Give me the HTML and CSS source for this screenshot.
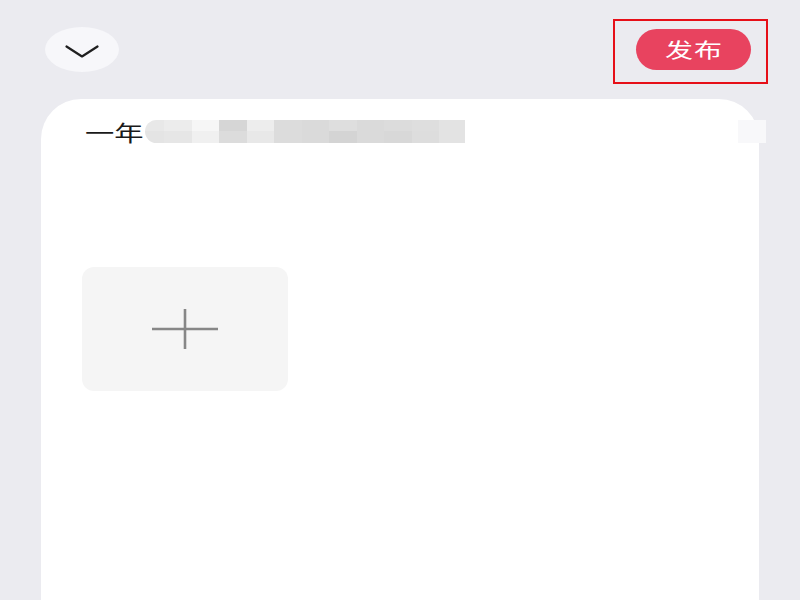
FILE: index.html
```html
<!DOCTYPE html>
<html lang="zh-CN">
<head>
    <meta charset="UTF-8">
    <meta name="viewport" content="width=device-width, initial-scale=1.0">
    <title>发布</title>
    <link rel="stylesheet" href="styles.css">
</head>
<body>
    <!-- Top bar -->
    <div class="topbar">
        <button class="back-btn" aria-label="收起">
            <svg width="34" height="13" viewBox="0 0 34 13" fill="none" stroke="#1f1f1f" stroke-width="2.2" stroke-linecap="round" stroke-linejoin="round">
                <polyline points="1.5 1.5 17 11.5 32.5 1.5"></polyline>
            </svg>
        </button>
        <div class="publish-box">
            <button class="publish-btn"><span class="publish-text">发布</span></button>
        </div>
    </div>

    <!-- Editor card -->
    <div class="card">
        <div class="title-row">
            <span class="title-text"><span class="title-inner">一年</span></span>
            <div class="mosaic">
                <span></span><span></span><span></span><span></span><span></span><span></span>
                <span></span><span></span><span></span><span></span><span></span><span></span>
                <span></span><span></span><span></span><span></span><span></span><span></span>
                <span></span><span></span><span></span><span></span><span></span><span></span>
            </div>
            <div class="spacer"></div>
            <div class="corner-square"></div>
        </div>

        <div class="upload-tile">
            <svg width="66" height="40" viewBox="0 0 66 40" fill="none" stroke="#878787" stroke-width="2.6">
                <line x1="0" y1="20" x2="66" y2="20"></line>
                <line x1="33" y1="0" x2="33" y2="40"></line>
            </svg>
        </div>
    </div>
</body>
</html>
```

FILE: styles.css
```css
body {
    margin: 0;
    height: 600px;
    overflow: hidden;
    background-color: #ebebf0;
    font-family: "Noto Sans CJK SC", "Noto Sans", sans-serif;
}

.topbar {
    display: flex;
    justify-content: space-between;
    align-items: flex-start;
    height: 99px;
    padding: 0 32px 0 45px;
}

.back-btn {
    margin-top: 27px;
    width: 74px;
    height: 45px;
    border: none;
    border-radius: 50%;
    background-color: #f7f7fa;
    display: flex;
    align-items: center;
    justify-content: center;
    padding: 3px 0 0;
}

.publish-box {
    margin-top: 19px;
    width: 155px;
    height: 65px;
    box-sizing: border-box;
    border: 2px solid #e60f18;
    padding: 8px 0 0 21px;
}

.publish-btn {
    width: 115px;
    height: 41px;
    border: none;
    border-radius: 21px;
    background-color: #e8435f;
    display: flex;
    align-items: center;
    justify-content: center;
    padding: 0;
}

.publish-text {
    display: inline-block;
    color: white;
    font-size: 20px;
    font-weight: 500;
    letter-spacing: 1px;
    transform: scaleX(1.4);
}

.card {
    margin: 0 41px;
    height: 501px;
    box-sizing: border-box;
    background-color: white;
    border-radius: 40px 40px 0 0;
    padding-top: 21px;
}

.title-row {
    display: flex;
    align-items: center;
    height: 23px;
    padding-left: 44px;
}

.title-text {
    width: 60px;
    font-size: 22px;
    line-height: 23px;
    color: #1a1a1a;
}

.title-inner {
    display: inline-block;
    transform: scaleX(1.33);
    transform-origin: left center;
}

.mosaic {
    display: grid;
    grid-template-columns: 19px repeat(10, 27.5px) 26px;
    grid-template-rows: 11px 12px;
    width: 320px;
    border-radius: 12px 0 0 12px;
    overflow: hidden;
}

.mosaic span { background-color: #dcdcdc; }
.mosaic span:nth-child(1) { background-color: #e8e8e8; }
.mosaic span:nth-child(2) { background-color: #ececec; }
.mosaic span:nth-child(3) { background-color: #f6f6f6; }
.mosaic span:nth-child(4) { background-color: #d6d6d6; }
.mosaic span:nth-child(5) { background-color: #ededed; }
.mosaic span:nth-child(7) { background-color: #dadada; }
.mosaic span:nth-child(8) { background-color: #dedede; }
.mosaic span:nth-child(9) { background-color: #dadada; }
.mosaic span:nth-child(11) { background-color: #dedede; }
.mosaic span:nth-child(12) { background-color: #e3e3e3; }
.mosaic span:nth-child(13) { background-color: #e4e4e4; }
.mosaic span:nth-child(14) { background-color: #e6e6e6; }
.mosaic span:nth-child(15) { background-color: #f0f0f0; }
.mosaic span:nth-child(16) { background-color: #dcdcdc; }
.mosaic span:nth-child(17) { background-color: #e8e8e8; }
.mosaic span:nth-child(19) { background-color: #dadada; }
.mosaic span:nth-child(20) { background-color: #d4d4d4; }
.mosaic span:nth-child(21) { background-color: #dadada; }
.mosaic span:nth-child(22) { background-color: #d8d8d8; }
.mosaic span:nth-child(23) { background-color: #dddddd; }
.mosaic span:nth-child(24) { background-color: #e3e3e3; }

.spacer {
    flex: 1;
}

.corner-square {
    width: 28px;
    height: 23px;
    margin-right: -7px;
    background-color: #f8f8fa;
}

.upload-tile {
    margin: 124px 0 0 41px;
    width: 206px;
    height: 124px;
    border-radius: 12px;
    background-color: #f5f5f5;
    display: flex;
    align-items: center;
    justify-content: center;
}
```
